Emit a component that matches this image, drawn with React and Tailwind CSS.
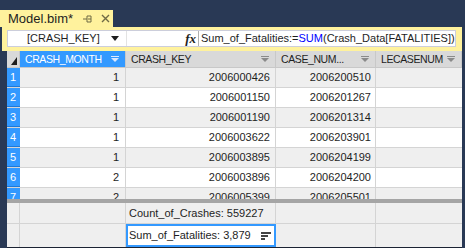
import React from "react";

const rows = [
  { n: 1, m: 1, key: "2006000426", cn: "2006200510" },
  { n: 2, m: 1, key: "2006001150", cn: "2006201267" },
  { n: 3, m: 1, key: "2006001190", cn: "2006201314" },
  { n: 4, m: 1, key: "2006003622", cn: "2006203901" },
  { n: 5, m: 1, key: "2006003895", cn: "2006204199" },
  { n: 6, m: 2, key: "2006003896", cn: "2006204200" },
  { n: 7, m: 2, key: "2006005399", cn: "2006205501" },
];

const FilterArrow = ({ color }) => (
  <svg width="8" height="6" viewBox="0 0 8 6" className="shrink-0">
    <rect x="0" y="0" width="8" height="1" fill={color} />
    <path d="M0 2 H8 L4 6 Z" fill={color} />
  </svg>
);

const HeaderCell = ({ label, w, active }) => (
  <div
    className={`${w} flex items-center justify-between pl-[5px] pr-[6px] border-r border-[#c8c8c8] text-[10.5px] tracking-[-0.4px] ${
      active ? "bg-[#3399ff] text-white" : "bg-[#d9d9d9] text-[#1e1e1e]"
    }`}
  >
    <span>{label}</span>
    <FilterArrow color={active ? "#dce9ff" : "#8a8a8a"} />
  </div>
);

export default function App() {
  return (
    <div
      className="w-[465px] h-[248px] bg-[#293955] overflow-hidden flex flex-col text-[11px] leading-none"
      style={{ fontFamily: '"Liberation Sans", Arial, sans-serif' }}
    >
      <div className="h-[10px] shrink-0" />
      {/* document tab */}
      <div className="flex h-[17px] shrink-0">
        <div className="w-[113px] bg-[#fff29d] flex items-center pl-[8px] text-[13px] text-[#1e1e1e]">
          <span>Model.bim*</span>
          <span className="ml-[9px]">
            <svg width="10" height="10" viewBox="0 0 10 10">
              <path d="M1 5 H5 M5 2 V8 M5 2 H9 V8 H5 M6 5 H9" stroke="#6f6a45" strokeWidth="1" fill="none" />
            </svg>
          </span>
          <span className="ml-[9px]">
            <svg width="9" height="9" viewBox="0 0 9 9">
              <path d="M1 1 L8 8 M8 1 L1 8" stroke="#6f6a45" strokeWidth="1.4" />
            </svg>
          </span>
        </div>
      </div>

      {/* formula strip */}
      <div className="bg-[#fff29d] ml-[2px] mr-[3px] pl-[5px] pr-[6px] pt-[3px] pb-[4px] shrink-0">
        <div className="h-[17px] bg-white border border-[#cccedb] flex items-center">
          <div className="w-[119px] h-full flex items-center justify-between pl-[19px] pr-[7px] border-r border-[#e3e3e3]">
            <span className="text-[#1e1e1e]">[CRASH_KEY]</span>
            <svg width="8" height="5" viewBox="0 0 8 5">
              <path d="M0 0 H8 L4 5 Z" fill="#1e1e1e" />
            </svg>
          </div>
          <div className="flex-1 flex items-center justify-end pr-[2px] border-r border-[#b0b0b0] h-full">
            <span className="italic font-bold text-[13px] text-[#1e1e1e]" style={{ fontFamily: '"Liberation Serif", serif' }}>
              fx
            </span>
          </div>
          <div className="w-[256px] pl-[2px] text-[#1e1e1e] whitespace-nowrap">
            Sum_of_Fatalities:=<span className="text-[#0000ff]">SUM</span>(Crash_Data[FATALITIES])
          </div>
        </div>
      </div>

      {/* grid */}
      <div className="flex-1 flex pl-[7px] pr-[3px] min-h-0">
        <div className="flex-1 flex flex-col bg-[#efefef] border-b border-[#1b2333]">
          <div className="h-[17px] shrink-0 flex border-b border-[#c8c8c8]">
            <div className="w-[13px] bg-[#d9d9d9] border-r border-[#c8c8c8] flex items-end justify-end p-[2px]">
              <svg width="6" height="8" viewBox="0 0 6 8">
                <path d="M6 0 V8 H0 Z" fill="#1e1e1e" />
              </svg>
            </div>
            <HeaderCell label="CRASH_MONTH" w="w-[106px]" active />
            <HeaderCell label="CRASH_KEY" w="w-[150px]" />
            <HeaderCell label="CASE_NUM..." w="w-[100px]" />
            <HeaderCell label="LECASENUM" w="flex-1" />
          </div>

          <div className="h-[131px] shrink-0 overflow-hidden flex flex-col">
            {rows.map((r) => (
              <div
                key={r.n}
                className={`h-[20px] shrink-0 flex border-b border-[#d4d4d4] ${
                  r.n % 2 ? "bg-[#efefef]" : "bg-white"
                }`}
              >
                <div className="w-[13px] bg-[#3399ff] text-white flex items-center pl-[3px] border-b border-[#1c79d9]">
                  {r.n}
                </div>
                <div className="w-[106px] flex items-center justify-end pr-[6px] border-r border-[#d4d4d4] text-[#1e1e1e]">
                  {r.m}
                </div>
                <div className="w-[150px] flex items-center justify-end pr-[5px] border-r border-[#d4d4d4] text-[#1e1e1e]">
                  {r.key}
                </div>
                <div className="w-[100px] flex items-center justify-end pr-[4px] border-r border-[#d4d4d4] text-[#1e1e1e]">
                  {r.cn}
                </div>
                <div className="flex-1" />
              </div>
            ))}
          </div>

          <div className="h-[4px] shrink-0 bg-[#a5a5a5]" />

          {/* measure grid */}
          <div className="h-[21px] shrink-0 flex border-b border-[#d4d4d4]">
            <div className="w-[13px] border-r border-[#d4d4d4]" />
            <div className="w-[106px] border-r border-[#d4d4d4]" />
            <div className="w-[150px] border-r border-[#d4d4d4] flex items-center pl-[3px] text-[#1e1e1e] whitespace-nowrap">
              Count_of_Crashes: 559227
            </div>
            <div className="w-[100px] border-r border-[#d4d4d4]" />
            <div className="flex-1" />
          </div>
          <div className="flex-1 flex">
            <div className="w-[13px] border-r border-[#d4d4d4]" />
            <div className="w-[106px] border-r border-[#d4d4d4]" />
            <div className="w-[150px] border-2 border-[#3399ff] bg-white flex items-center justify-between pl-[1px] pr-[3px] text-[#1e1e1e] whitespace-nowrap">
              <span>Sum_of_Fatalities: 3,879</span>
              <svg width="10" height="8" viewBox="0 0 10 8">
                <rect x="0" y="0" width="10" height="2" fill="#444" />
                <rect x="0" y="3" width="7" height="2" fill="#444" />
                <rect x="0" y="6" width="4" height="2" fill="#444" />
              </svg>
            </div>
            <div className="w-[100px] border-r border-[#d4d4d4]" />
            <div className="flex-1" />
          </div>
        </div>
      </div>
    </div>
  );
}
